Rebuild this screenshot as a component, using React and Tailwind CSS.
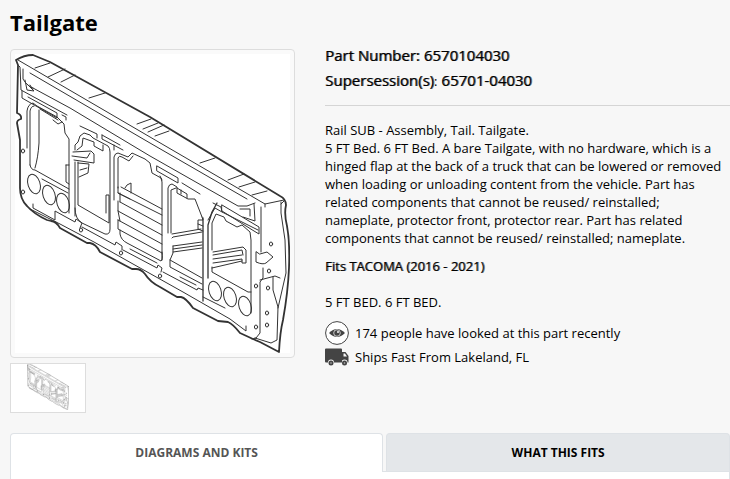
import React, { useState } from "react";

const holes = [
  [23, 151], [23, 192], [81, 230], [121, 253], [160, 276], [271, 244], [269, 271],
  [268, 288], [256, 286], [267, 313], [267, 325], [256, 327],
];

const rounds = [
  [34, 184], [49, 195], [63, 203], [215, 291], [230, 297], [245, 306],
];

const Tailgate = ({ className, line, edge }) => (
  <svg
    viewBox="15 54 275 299"
    className={className}
    fill="none"
    stroke="currentColor"
    strokeLinejoin="round"
    strokeLinecap="round"
    role="img"
    aria-label="Tailgate"
  >
    {/* outer shell */}
    <g strokeWidth={edge}>
      <path d="M18 65L16 60Q24 55 33 55L50 62L150 117L280 196Q286 199 286 205Q284 214 287 226Q290 242 289 268Q288 292 283 320Q280 332 279 352L260 342L253 339L240 333Q233 324 228 322L218 321L193 308Q186 298 181 297L177 297L160 287Q150 282 145 274Q141 269 136 269L132 269L100 252Q96 244 90 243L87 243L60 228Q56 221 51 221L47 220Q34 214 27 206Q20 199 20 188L20 140L17 123Q17 120 21 119Q22 115 17 113L18 65" />
    </g>
    <g strokeWidth={line}>
      <path d="M18 60L150 137L265 204L284 200M265 204L265 207M30 73L150 143L247 199M33 88L70 108L150 156L238 206L247 206L255 203" />
      <path d="M18 65L20 67L21 90L67 115M23 69L23 79Q27 86 33 88M25 80L27 90L34 91L27 84M30 85L33 90" />
      <path d="M35 68L50 63M48 77L65 69M61 82L75 75M89 98L105 93M137 124L151 119M143 129L158 123M148 132L164 125M155 136L169 131M200 163L215 158M228 180L244 174M239 187L255 182M252 195L267 191" />
      {/* first opening */}
      <path d="M22 91L22 98L57 118L57 113L28 97M62 115L66 117L66 120M27 148L27 111Q28 104 33 103L37 106L57 117L62 122L64 124L65 133L69 139L69 213M30 165L30 111Q31 106 34 106M39 110L39 143Q38 158 35 168M30 165Q31 170 35 170L69 189M40 109L58 120M53 120L58 124L62 122M66 165L66 182L69 184M66 165L69 165M42 179L68 193" />
      {/* second opening */}
      <path d="M75 216L75 162M75 150L75 145L78 142L80 136L84 133L90 135L93 138L108 146Q110 148 110 152L110 229Q110 235 105 234L82 223Q75 219 75 208M78 162L78 205L109 223L109 195L106 195L106 213M77 150L82 146L83 138L94 142L94 146L103 151L103 145M73 152L91 151L94 154L94 163L74 160M72 156L87 158L90 153M78 163L89 164L88 173L79 177M80 170L87 168M80 126L97 134L97 138M102 135L102 139L123 150M102 135L120 145M114 145L114 150" />
      {/* slatted opening */}
      <path d="M114 200L114 157Q115 153 118 153L128 157L132 153L145 159L150 163L152 173L161 178L162 182L162 260M118 188L118 158Q119 155 122 157L129 161L133 156M118 187L118 193L130 199M125 188L127 185L131 183L131 193M121 187L162 209M118 193L162 215M120 202L162 225M118 201L118 211L162 235M118 211L120 221M118 220L162 244M118 220L118 229L162 253M120 202L120 193M120 230L120 234Q121 240 127 243L161 261Q163 260 162 252M157 166L178 178L178 183L157 171ZM182 183L200 194M160 176L162 180" />
      {/* fourth opening */}
      <path d="M168 233L168 188Q169 184 172 184L177 187L177 193L188 199L195 199L202 217M171 233L171 190L176 188M177 188L187 194L187 198M181 190L181 194M202 217L203 220L198 220L198 229L203 231M198 224L203 226M172 234L201 229M172 238L173 237L202 232M173 246L202 242M173 249L202 245M173 252L202 248M173 246L173 253L170 260L170 267L202 284M170 260L202 278M180 277L196 285" />
      <path d="M203 218L203 301M208 278L208 225L212 212L217 203" strokeWidth={line * 1.3} />
      {/* fifth opening */}
      <path d="M212 250L212 223L216 214L224 217L226 221L237 227L242 225L250 232L251 240L251 313M212 267L212 272L248 292L251 292M213 252L243 247L246 250L246 263L242 263L242 259L213 263M213 255L242 250L243 255M213 259L242 255M212 268L242 261M213 203L221 207L222 212L258 230M222 205L259 227L259 234L254 231L222 211ZM208 220L215 208L222 212M240 209L250 209L250 216M254 204L255 221L243 217M261 207L261 252" />
      {/* side panel */}
      <path d="M256 252L256 262Q263 265 266 263L273 257L267 252L260 254ZM263 268L263 278L260 282L260 333L256 338L252 339M260 280L275 276L280 278M273 277L273 290L278 307L277 340L271 343L255 338M281 202L281 213L285 240L286 273L278 308M284 201L281 204" />
      {/* lower rail */}
      <path d="M33 204L33 208L55 220L55 211L75 222L76 219L82 223L80 228M82 227L115 245L116 242L122 246L122 250M123 250L157 268L158 265L162 268L161 272M163 272L197 290L198 288L203 290M130 249L157 263M203 297L225 308M30 209L60 224L94 242L133 264L183 292L230 319L246 331L246 326" />
      {holes.map(([x, y]) => (
        <ellipse key={`${x}-${y}`} cx={x} cy={y} rx="1.6" ry="2" />
      ))}
      {rounds.map(([x, y]) => (
        <ellipse key={`${x}-${y}`} cx={x} cy={y} rx="6" ry="10" transform={`rotate(-18 ${x} ${y})`} />
      ))}
    </g>
  </svg>
);

const EyeIcon = () => (
  <svg viewBox="0 0 24 24" className="size-6 shrink-0" aria-hidden="true">
    <circle cx="12" cy="12" r="11.4" fill="#fff" stroke="#444" />
    <path d="M4 12Q12 4 20 12Q12 20 4 12Z" fill="#444" />
    <circle cx="12" cy="12" r="3.3" fill="#444" stroke="#ccc" />
    <circle cx="13" cy="11" r="1" fill="#f7f7f7" />
  </svg>
);

const TruckIcon = () => (
  <svg viewBox="0 0 24 18" className="w-6 h-[18px] shrink-0" fill="#444" aria-hidden="true">
    <path d="M1 0.5H16Q17 0.5 17 1.5V14.5H9A3 3 0 0 0 3 14.5H1Q0 14.5 0 13.5V1.5Q0 0.5 1 0.5Z" />
    <path d="M17 4H20.5L23.5 8V14.5H22.5A3 3 0 0 0 16.5 14.5V4Z" />
    <path d="M18.5 5.5H20L22 8.5H18.5Z" fill="#f7f7f7" />
    <circle cx="6" cy="15" r="2.5" />
    <circle cx="19.5" cy="15" r="2.5" />
    <circle cx="6" cy="15" r="0.8" fill="#bbb" />
    <circle cx="19.5" cy="15" r="0.8" fill="#bbb" />
  </svg>
);

const tabs = ["Diagrams and Kits", "What This Fits"];

const App = () => {
  const [active, setActive] = useState(0);

  return (
    <main className="min-h-screen flex flex-col bg-[#f7f7f7] pl-2.5 font-['Open_Sans',sans-serif] text-[13px] leading-[18px] text-black">
      <h1 className="pt-[7px] text-[22px] leading-[30px] font-bold">Tailgate</h1>

      <div className="mt-3 flex items-start gap-[30px]">
        <div className="w-[285px] shrink-0">
          <div className="rounded border border-[#ddd] bg-[#fafafa] p-1">
            <Tailgate className="block w-full bg-white text-[#333]" line={1} edge={1.8} />
          </div>
          <button
            type="button"
            className="mt-[5px] flex h-[50px] w-[76px] items-start justify-center border border-[#ddd] bg-white"
          >
            <Tailgate className="h-[46px] text-[#888]" line={2} edge={3} />
          </button>
        </div>

        <div className="min-w-0 flex-1">
          <div className="-mt-1.5 border-b border-[#d5d5d5] pb-[11px] text-[15px] leading-[25px] font-medium">
            <h2 className="[text-shadow:1px_0_#0009]">Part Number: 6570104030</h2>
            <h2 className="[text-shadow:1px_0_#0009]">
              Supersession(s)
              <span className="text-[13px] font-normal [text-shadow:none]">:</span> 65701-04030
            </h2>
          </div>

          <p className="mt-[15px]">
            Rail SUB - Assembly, Tail. Tailgate.
            <br />5 FT Bed. 6 FT Bed. A bare Tailgate, with no hardware, which is a
            hinged flap at the back of a truck that can be lowered or removed when
            loading or unloading content from the vehicle. Part has related
            components that cannot be reused/ reinstalled; nameplate, protector
            front, protector rear. Part has related components that cannot be
            reused/ reinstalled; nameplate.
          </p>
          <p className="mt-2.5 font-medium [text-shadow:1px_0_#0009]">Fits TACOMA (2016 - 2021)</p>
          <p className="mt-[18px]">5 FT BED. 6 FT BED.</p>

          <div className="mt-2.5 flex items-center gap-1.5">
            <EyeIcon />
            <span>174 people have looked at this part recently</span>
          </div>
          <div className="flex h-6 items-center gap-1.5">
            <TruckIcon />
            <span>Ships Fast From Lakeland, FL</span>
          </div>
        </div>
      </div>

      <div className="mt-5 flex gap-[3px]" role="tablist">
        {tabs.map((tab, i) => (
          <button
            key={tab}
            type="button"
            role="tab"
            aria-selected={active === i}
            onClick={() => setActive(i)}
            className={
              active === i
                ? "relative z-10 -mb-px h-[39px] flex-auto rounded-t border border-b-0 border-[#dee2e6] bg-white text-xs font-bold uppercase text-[#555]"
                : "h-[38px] flex-auto rounded-t border border-b-0 border-[#dee2e6] bg-[#e4e7ea] text-xs font-bold uppercase text-black"
            }
          >
            {tab}
          </button>
        ))}
      </div>
      <div className="flex-1 border border-b-0 border-[#dee2e6] bg-white" role="tabpanel" />
    </main>
  );
};

export default App;
